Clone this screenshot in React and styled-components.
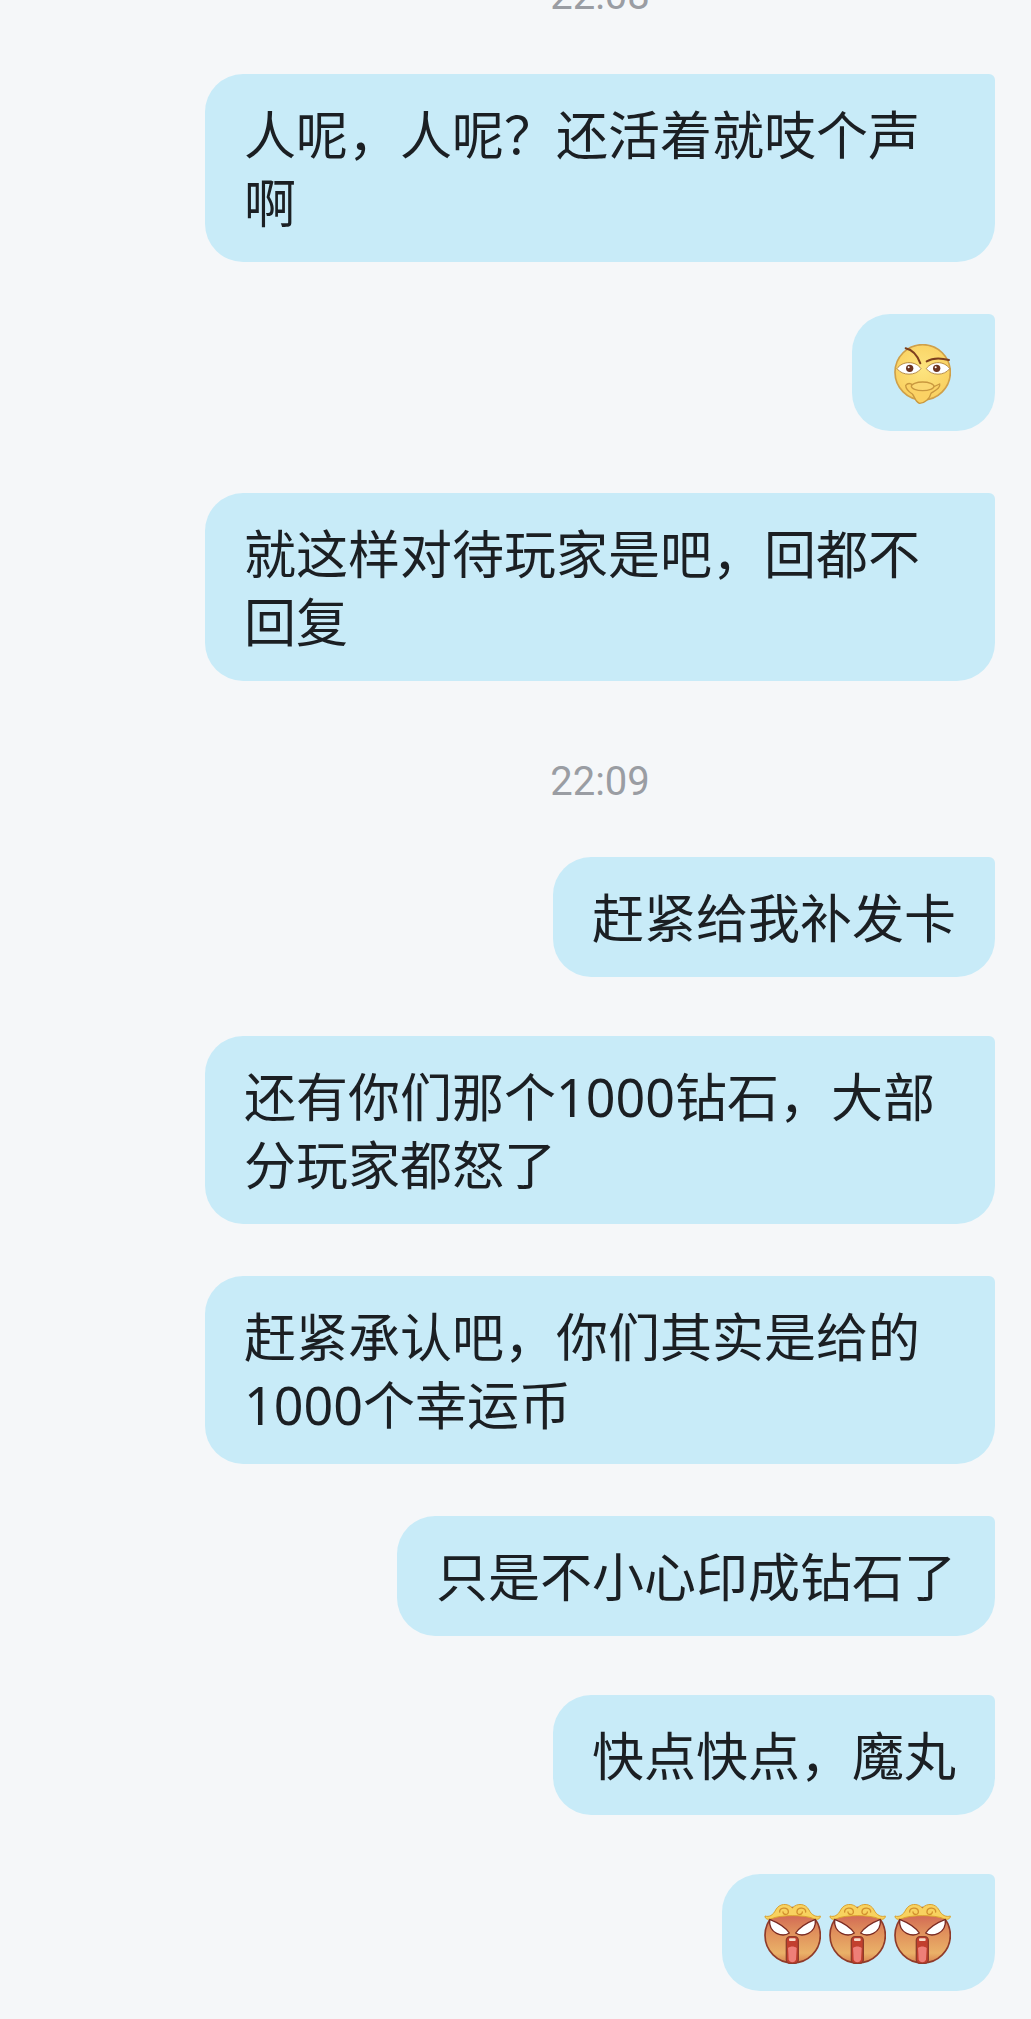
import React from 'react'
import styled, { createGlobalStyle } from 'styled-components'

const Global = createGlobalStyle`
  html, body {
    margin: 0;
    padding: 0;
    background: #f5f7f9;
  }
  body {
    height: 2019px;
    overflow: hidden;
  }
`

const Page = styled.div`
  width: 1031px;
  height: 2019px;
  overflow: hidden;
  box-sizing: border-box;
  padding: 0 36px 0 205px;
  display: flex;
  flex-direction: column;
  align-items: flex-end;
  background: #f5f7f9;
  font-family: "Noto Sans", "Noto Sans CJK SC", sans-serif;
`

const Time = styled.div`
  align-self: center;
  margin-top: ${p => p.$top}px;
  height: 48px;
  line-height: 48px;
  font-family: Roboto, "Noto Sans", sans-serif;
  font-size: 40px;
  color: #9a9da3;
`

const Bubble = styled.div`
  margin-top: ${p => p.$top}px;
  box-sizing: border-box;
  max-width: 790px;
  padding: 27px 39px 25px 39px;
  background: #c8ebf8;
  border-radius: 38px 6px 38px 38px;
  font-size: 52px;
  line-height: 68px;
  color: #1b1f23;
`

const EmojiBubble = styled(Bubble)`
  display: flex;
  gap: 8px;
  padding: 30px 44px 27px 42px;
`

const Face = styled.svg`
  display: block;
  width: 57px;
  height: 60px;
`

function DuckFace() {
  return (
    <Face viewBox="27 28 171 180">
      <defs>
        <radialGradient id="duck" cx="0.5" cy="0.45" r="0.6">
          <stop offset="0" stopColor="#fde47f" />
          <stop offset="1" stopColor="#f9cf5e" />
        </radialGradient>
      </defs>
      <circle cx="113" cy="113" r="83" fill="url(#duck)" stroke="#cfa04a" strokeWidth="5" />
      <path d="M62 41 C80 45 97 62 106 86" fill="none" stroke="#7d3f1e" strokeWidth="6" strokeLinecap="round" />
      <path d="M125 80 C145 68 170 70 192 76" fill="none" stroke="#7d3f1e" strokeWidth="6" strokeLinecap="round" />
      <path d="M36 102 C52 78 92 78 108 102 C92 124 52 124 36 102 Z" fill="#fff" stroke="#a8782f" strokeWidth="2.5" />
      <path d="M124 102 C140 78 178 78 194 102 C178 124 140 124 124 102 Z" fill="#fff" stroke="#a8782f" strokeWidth="2.5" />
      <circle cx="74" cy="101" r="11" fill="#6b3320" />
      <circle cx="155" cy="101" r="11" fill="#6b3320" />
      <circle cx="71" cy="98" r="3" fill="#fff" />
      <circle cx="152" cy="98" r="3" fill="#fff" />
      <path d="M62 152 C72 140 84 150 92 160 C110 172 140 160 164 148 C168 160 150 168 138 176 C134 192 120 206 104 206 C92 204 90 188 82 178 C72 172 62 164 62 152 Z" fill="#fbd264" stroke="#c9983f" strokeWidth="4" />
      <ellipse cx="113" cy="155" rx="34" ry="13" fill="#fbd872" stroke="#c9983f" strokeWidth="4" />
    </Face>
  )
}

function MonkeyFace({ id }) {
  return (
    <Face viewBox="27 28 171 180">
      <defs>
        <linearGradient id={id} x1="0" y1="0" x2="0" y2="1">
          <stop offset="0" stopColor="#cc5a52" />
          <stop offset="0.45" stopColor="#e0905c" />
          <stop offset="0.82" stopColor="#eab168" />
          <stop offset="1" stopColor="#d8834f" />
        </linearGradient>
      </defs>
      <circle cx="113" cy="122" r="83" fill={`url(#${id})`} stroke="#8f3b2a" strokeWidth="5" />
      <path d="M30 64 C42 68 54 62 62 46 C72 26 98 24 112 40 C126 24 152 26 162 46 C170 62 184 68 196 64 C196 74 186 76 176 72 C150 60 76 60 50 72 C40 76 30 74 30 64 Z" fill="#f8d25f" stroke="#dba22f" strokeWidth="3" />
      <path d="M74 52 C72 38 98 36 100 50 C102 62 84 62 84 52" fill="none" stroke="#d2902e" strokeWidth="4" strokeLinecap="round" />
      <path d="M152 52 C154 38 128 36 126 50 C124 62 142 62 142 52" fill="none" stroke="#d2902e" strokeWidth="4" strokeLinecap="round" />
      <path d="M44 74 C64 82 92 98 103 115 C84 128 40 118 44 74 Z" fill="#fff" stroke="#7a2a22" strokeWidth="4" strokeLinejoin="round" />
      <path d="M181 74 C161 82 133 98 122 115 C141 128 185 118 181 74 Z" fill="#fff" stroke="#7a2a22" strokeWidth="4" strokeLinejoin="round" />
      <rect x="94" y="126" width="36" height="80" rx="11" fill="#c23f2e" stroke="#8f3b2a" strokeWidth="4" />
      <rect x="102" y="131" width="20" height="8" rx="3" fill="#f7d9c8" />
      <path d="M99 160 C106 154 118 154 125 160 L123 194 C121 206 103 206 101 194 Z" fill="#ee7f78" />
    </Face>
  )
}

export default function App() {
  return (
    <Page>
      <Global />
      <Time $top={-28}>22:08</Time>
      <Bubble $top={54}>人呢，人呢？还活着就吱个声啊</Bubble>
      <EmojiBubble $top={52}><DuckFace /></EmojiBubble>
      <Bubble $top={62}>就这样对待玩家是吧，回都不回复</Bubble>
      <Time $top={77}>22:09</Time>
      <Bubble $top={51}>赶紧给我补发卡</Bubble>
      <Bubble $top={59}>还有你们那个1000钻石，大部分玩家都怒了</Bubble>
      <Bubble $top={52}>赶紧承认吧，你们其实是给的1000个幸运币</Bubble>
      <Bubble $top={52}>只是不小心印成钻石了</Bubble>
      <Bubble $top={59}>快点快点，魔丸</Bubble>
      <EmojiBubble $top={59}>
        <MonkeyFace id="m1" />
        <MonkeyFace id="m2" />
        <MonkeyFace id="m3" />
      </EmojiBubble>
    </Page>
  )
}
